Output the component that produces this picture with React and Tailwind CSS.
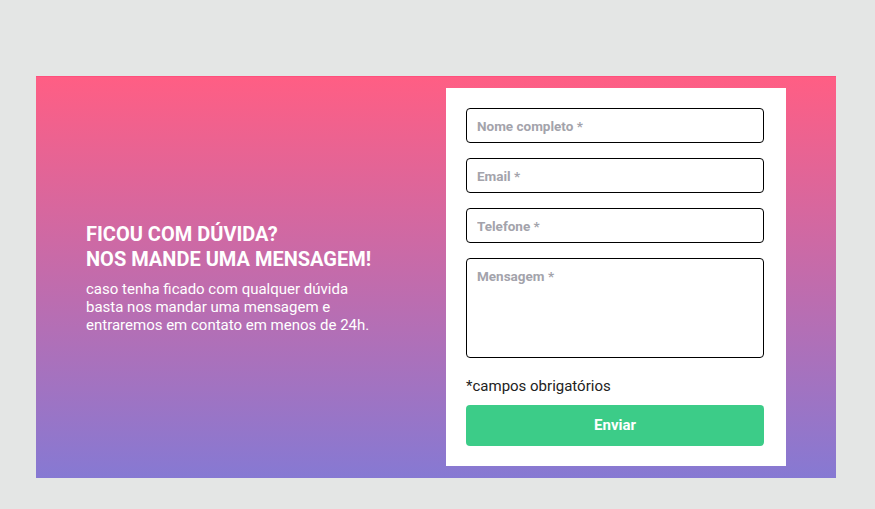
import React from 'react';

const fields = ['Nome completo *', 'Email *', 'Telefone *'];

const App = () => {
  return (
    <div className="min-h-[509px] w-full bg-[#e4e6e5] pt-[76px] pl-[36px] font-['Roboto',sans-serif]">
      <div className="flex w-[800px] h-[402px] border-t border-[#ff4f7d] bg-[linear-gradient(to_bottom,#ff5e84,#8679d3)]">
        <div className="flex-1 flex flex-col justify-center pl-[50px] text-white">
          <h2 className="text-[20px] leading-[25px] font-bold uppercase">
            Ficou com dúvida?
            <br />
            Nos mande uma mensagem!
          </h2>
          <p className="mt-[8px] text-[15px] leading-[18px] w-[290px]">
            caso tenha ficado com qualquer dúvida basta nos mandar uma mensagem e entraremos em contato em menos de 24h.
          </p>
        </div>
        <div className="mt-[11px] mb-[12px] mr-[50px] w-[340px] bg-white pt-[20px] pb-[20px] pl-[20px] pr-[22px] flex flex-col">
          {fields.map((f) => (
            <input
              key={f}
              type="text"
              placeholder={f}
              className="h-[35px] mb-[15px] w-full rounded-[4px] border border-black px-[10px] text-[13.5px] font-bold placeholder:text-[#a3a3ab] outline-none"
            />
          ))}
          <textarea
            placeholder="Mensagem *"
            className="h-[100px] w-full resize-none rounded-[4px] border border-black px-[10px] py-[7px] text-[13.5px] font-bold placeholder:text-[#a3a3ab] outline-none"
          />
          <p className="mt-[19px] text-[15px] leading-[18px] text-[#222]">*campos obrigatórios</p>
          <button className="mt-[10px] h-[41px] w-full rounded-[4px] bg-[#3ccc88] text-[15px] font-bold text-white">
            Enviar
          </button>
        </div>
      </div>
    </div>
  );
};

export default App;
